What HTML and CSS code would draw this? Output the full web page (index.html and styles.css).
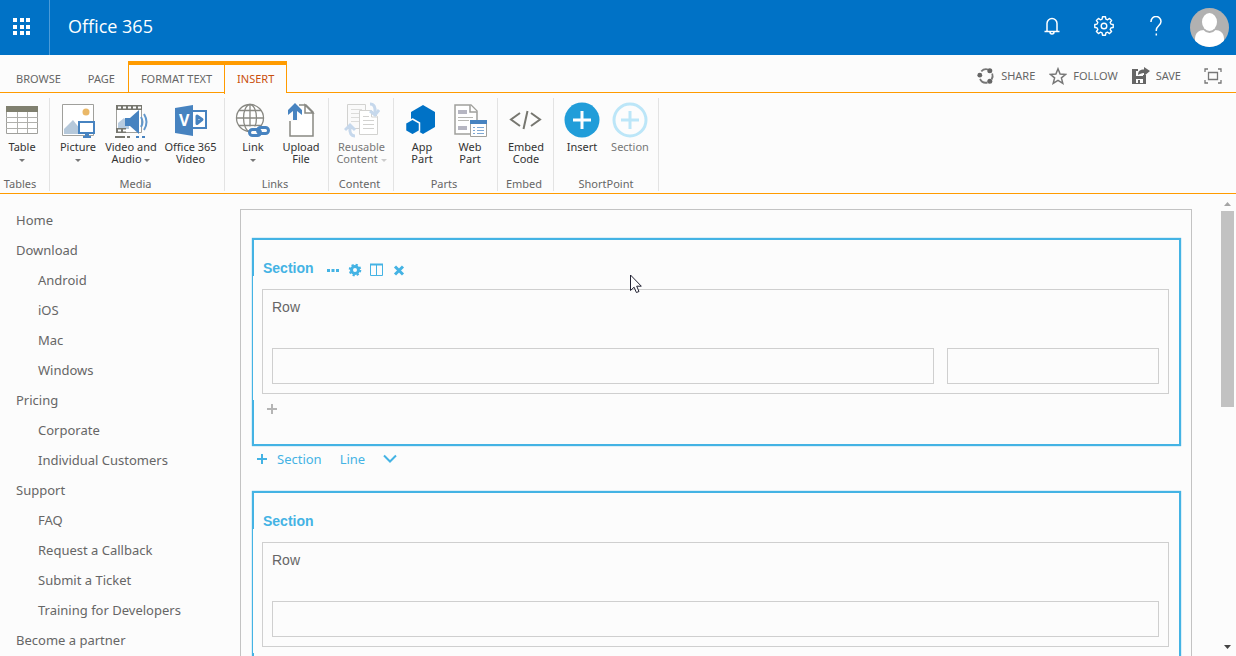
FILE: index.html
```html
<!DOCTYPE html>
<html lang="en">
<head>
	<meta charset="UTF-8">
	<meta name="viewport" content="width=device-width, initial-scale=1.0">
	<title>Office 365</title>
	<link rel="stylesheet" href="styles.css">
</head>

<body>
	<header class="suite-bar">
		<button class="waffle" aria-label="App launcher">
			<svg width="18" height="18" viewBox="0 0 18 18" fill="#fff"><path d="M0 0h4v4H0zM7 0h4v4H7zM13 0h4v4h-4zM0 7h4v4H0zM7 7h4v4H7zM13 7h4v4h-4zM0 13h4v4H0zM7 13h4v4H7zM13 13h4v4h-4z"/></svg>
		</button>
		<a class="brand" href="#">Office 365</a>
		<button class="suite-btn" aria-label="Notifications">
			<svg width="18" height="20" viewBox="0 0 18 20" fill="none" stroke="#fff" stroke-width="1.500"><path d="M4 15.500V7.500a5 5 0 0 1 10 0v8M1.500 15.500h15M7 16a2 2 0 0 0 4 0"/></svg>
		</button>
		<button class="suite-btn" aria-label="Settings">
			<svg width="20" height="20" viewBox="0 0 20 20" fill="none" stroke="#fff" stroke-width="1.400"><path stroke-linejoin="round" d="M8.500 .8h3l.4 2.300 1.700.7 1.900-1.400 2.100 2.100-1.400 1.900.7 1.700 2.300.4v3l-2.300.4-.7 1.700 1.400 1.900-2.100 2.100-1.900-1.400-1.700.7-.4 2.300h-3l-.4-2.300-1.700-.7-1.900 1.400-2.100-2.100 1.400-1.900-.7-1.700-2.300-.4v-3l2.300-.4.7-1.700-1.400-1.900 2.100-2.100 1.900 1.400 1.700-.7z"/><circle cx="10" cy="10" r="2.800"/></svg>
		</button>
		<button class="suite-btn" aria-label="Help">
			<svg width="14" height="20" viewBox="0 0 14 20" fill="none" stroke="#fff" stroke-width="1.500"><path d="M2 6V5.500a5 5 0 0 1 10 0c0 4-4.700 4.500-4.700 8.500v1M7.300 17.500v2"/></svg>
		</button>
		<button class="avatar" aria-label="Account">
			<svg width="39" height="39" viewBox="0 0 39 39"><defs><clipPath id="face"><circle cx="19.500" cy="19.500" r="19.500"/></clipPath></defs><g clip-path="url(#face)"><path fill="#b1b1b1" d="M0 0h39v39H0z"/><path fill="#fff" d="M5 39V31c0-6 4-9 9-9h11c5 0 9 3 9 9v8z"/><ellipse cx="19.500" cy="14.500" rx="8.500" ry="10.500" fill="#b1b1b1"/><ellipse cx="19.500" cy="14" rx="7.500" ry="9" fill="#fff"/></g></svg>
		</button>
	</header>

	<nav class="tabs">
		<a class="tab" href="#">BROWSE</a>
		<a class="tab" href="#">PAGE</a>
		<div class="context-tabs">
			<a class="tab" href="#">FORMAT TEXT</a>
			<a class="tab active" href="#">INSERT</a>
		</div>
		<div class="actions">
			<button class="action">
				<svg width="18" height="18" viewBox="0 0 18 18" fill="none" stroke="#777" stroke-width="1.800"><path d="M4.300 4.300a6.700 6.700 0 0 1 6.700-1.800M15.200 6.500a6.700 6.700 0 0 1-.6 6M10.500 15.500a6.700 6.700 0 0 1-7.500-3.500"/><g fill="#666" stroke="none"><circle cx="12.800" cy="3.800" r="2.500"/><circle cx="2.800" cy="8.200" r="2.400"/><circle cx="12.800" cy="14.200" r="2.500"/></g></svg>
				SHARE
			</button>
			<button class="action">
				<svg width="18" height="18" viewBox="0 0 18 18" fill="none" stroke="#777" stroke-width="1.500"><path d="M9 1.800l2.100 5.200 5.600.4-4.300 3.500 1.400 5.400L9 13.300l-4.800 3 1.400-5.400L1.300 7.400l5.600-.4z"/></svg>
				FOLLOW
			</button>
			<button class="action">
				<svg width="18" height="18" viewBox="0 0 18 18"><path fill="#666" d="M0 2h6v2H4v5h7V8h3v9H0zM4 12v4h2v-3h2v3h3v-4z"/><path fill="#666" d="M12 0l6 4-6 5V6C9 6 8 7 6 8c0-4 2-5.500 6-5.500z"/></svg>
				SAVE
			</button>
			<button class="action" aria-label="Focus on content">
				<svg width="18" height="16" viewBox="0 0 18 16" fill="none" stroke="#777" stroke-width="1.300"><path d="M1 4V1h3M14 1h3v3M17 12v3h-3M4 15H1v-3M4.500 4.500h9v7h-9z"/></svg>
			</button>
		</div>
	</nav>

	<div class="ribbon">
		<section class="group first">
			<div class="commands">
				<button class="cmd">
					<svg width="36" height="36" viewBox="0 0 36 36"><path fill="#fff" stroke="#a0a09c" d="M2.500 4.500h31v27h-31z"/><path fill="none" stroke="#b0b0ac" d="M2 15.500h32M2 20.500h32M2 26.500h32M13.500 9v22M23.500 9v22"/><path fill="#80806f" d="M2 4h32v6H2z"/></svg>
					<span>Table<br><i class="caret"></i></span>
				</button>
			</div>
			<h2>Tables</h2>
		</section>
		<section class="group">
			<div class="commands">
				<button class="cmd">
					<svg width="36" height="36" viewBox="0 0 36 36"><path fill="#fff" stroke="#a0a09c" d="M2.500 2.500h31v31h-31z"/><circle cx="26" cy="10" r="3.500" fill="#eab868"/><path fill="#b5c8da" d="M4 32V27l9-9 7 9v5z"/><path fill="#fff" stroke="#4783c0" stroke-width="2" d="M19 20h15v11H19z"/><path fill="#4783c0" d="M25 31h4v3h2v2h-8v-2h2z"/></svg>
					<span>Picture<br><i class="caret"></i></span>
				</button>
				<button class="cmd video">
					<svg width="36" height="36" viewBox="0 0 36 36"><path fill="#fff" stroke="#a0a09c" d="M3.500 3.500h25v27h-25z"/><path fill="#b8cce0" d="M5 27v-6l6-5 5 6v5z"/><path stroke="#77776f" stroke-width="5" d="M3 5.500h26M3 28.500h10"/><path stroke="#fff" stroke-width="2" stroke-dasharray="3 2" d="M5 5.500h23M5 28.500h8"/><path fill="#4783c0" d="M12 16h5l9-8v24l-9-8h-5z"/><path fill="none" stroke="#6298cc" stroke-width="2" d="M28 15q3 5 0 10M31 12q5 8 0 16"/><path stroke="#77776f" stroke-width="2" d="M2 35h10M14 35h3"/><path stroke="#4783c0" stroke-width="2" d="M23 35h3M29 35h3"/></svg>
					<span>Video and<br>Audio <i class="caret"></i></span>
				</button>
				<button class="cmd office">
					<svg width="36" height="36" viewBox="0 0 36 36"><path fill="#fff" stroke="#4783c0" stroke-width="2" d="M18 9h15v17H18z"/><path fill="#4783c0" d="M2 6l18-3v31L2 31z"/><text class="logo-letter" x="6" y="24">V</text><path fill="#fff" stroke="#4783c0" stroke-width="3" stroke-linejoin="round" d="M24 14l5 3.500-5 4z"/></svg>
					<span>Office 365<br>Video</span>
				</button>
			</div>
			<h2>Media</h2>
		</section>
		<section class="group">
			<div class="commands">
				<button class="cmd">
					<svg width="36" height="36" viewBox="0 0 36 36" fill="none"><g stroke="#898983" stroke-width="1.300"><circle cx="15" cy="16" r="13.500" fill="#fff"/><ellipse cx="15" cy="16" rx="6.500" ry="13.500"/><path d="M15 2.500v27M1.500 16h27M4 8.500h22M4 23.500h22"/></g><path stroke="#fcfcfc" stroke-width="9" d="M14 29h18"/><g stroke="#4783c0" stroke-width="3"><rect x="14.500" y="27.500" width="11" height="6" rx="3"/><rect x="22.500" y="25.500" width="11" height="6" rx="3"/></g></svg>
					<span>Link<br><i class="caret"></i></span>
				</button>
				<button class="cmd">
					<svg width="36" height="36" viewBox="0 0 36 36"><path fill="#fff" stroke="#898983" stroke-width="1.500" d="M6 3h17l7 7v24H7V15"/><path fill="#fff" stroke="#898983" stroke-width="1.500" d="M22 3v8h8z"/><path stroke="#fcfcfc" stroke-width="10" d="M11 0v19"/><path fill="#4783c0" d="M12 1l7 7v5l-5-4v9h-4V9l-5 4V8z"/></svg>
					<span>Upload<br>File</span>
				</button>
			</div>
			<h2>Links</h2>
		</section>
		<section class="group">
			<div class="commands">
				<button class="cmd reusable" disabled>
					<svg width="36" height="36" viewBox="0 0 36 36"><path fill="#fafafa" stroke="#d2d2d0" d="M3.500 2.500h18v24h-18z"/><path stroke="#dcdcda" d="M7 7.500h11M7 11.500h8M7 15.500h8M7 19.500h8"/><path fill="#fff" stroke="#d2d2d0" d="M15.500 8.500h12l6 6v18h-18z"/><path fill="none" stroke="#d2d2d0" d="M19 14.500h6M19 18.500h11M19 22.500h11M19 26.500h11M27.500 9v6h6"/><path fill="none" stroke="#c6d8ec" stroke-width="3" d="M26 2q6 0 5 9M11 34q-6 0-5-9"/><path fill="none" stroke="#c6d8ec" stroke-width="3" d="M26 9l5 4 4-5M1 28l5-5 5 5"/></svg>
					<span>Reusable<br>Content <i class="caret"></i></span>
				</button>
			</div>
			<h2>Content</h2>
		</section>
		<section class="group">
			<div class="commands">
				<button class="cmd">
					<svg width="36" height="36" viewBox="0 0 36 36"><path fill="#0072c6" d="M19 3l12 7v15l-12 7-12-7V10z"/><path fill="#0072c6" stroke="#fcfcfc" stroke-width="1.500" d="M8.500 17l7 4v8l-7 4-7-4v-8z"/></svg>
					<span>App<br>Part</span>
				</button>
				<button class="cmd">
					<svg width="36" height="36" viewBox="0 0 36 36"><path fill="#fff" stroke="#a0a09c" stroke-width="1.500" d="M3 3h16l6 6v23H3z"/><path fill="#fff" stroke="#a0a09c" stroke-width="1.500" d="M18 3v7h7"/><path fill="#b6b6c2" d="M6 8h9v4H6zM6 24h9v4H6z"/><path stroke="#b6b6b2" d="M6 15.500h15M6 18.500h11"/><path fill="#fff" stroke="#a0a09c" d="M18.500 18.500h16v16h-16z"/><path fill="#4783c0" d="M18 18h17v4H18z"/><path stroke="#7fa8d3" stroke-dasharray="2 2 8 9" d="M21 25.500h11M21 28.500h11M21 31.500h11"/></svg>
					<span>Web<br>Part</span>
				</button>
			</div>
			<h2>Parts</h2>
		</section>
		<section class="group">
			<div class="commands">
				<button class="cmd">
					<svg width="36" height="36" viewBox="0 0 36 36" fill="none" stroke="#777770" stroke-width="2"><path d="M12 11l-9 6.500 9 6.500M23 11l9 6.500-9 6.500M19.500 9l-4 18"/></svg>
					<span>Embed<br>Code</span>
				</button>
			</div>
			<h2>Embed</h2>
		</section>
		<section class="group last">
			<div class="commands">
				<button class="cmd">
					<svg width="36" height="36" viewBox="0 0 36 36"><circle cx="18" cy="18" r="17.500" fill="#219dd9"/><path stroke="#fff" stroke-width="3" d="M9 18h18M18 9v18"/></svg>
					<span>Insert</span>
				</button>
				<button class="cmd" disabled>
					<svg width="36" height="36" viewBox="0 0 36 36"><circle cx="18" cy="18" r="16" fill="none" stroke="#bce6f8" stroke-width="3"/><path stroke="#bce6f8" stroke-width="3" d="M9 18h18M18 9v18"/></svg>
					<span>Section</span>
				</button>
			</div>
			<h2>ShortPoint</h2>
		</section>
	</div>

	<main class="workspace">
		<nav class="side-nav">
			<ul>
				<li><a href="#">Home</a></li>
				<li><a href="#">Download</a>
					<ul>
						<li><a href="#">Android</a></li>
						<li><a href="#">iOS</a></li>
						<li><a href="#">Mac</a></li>
						<li><a href="#">Windows</a></li>
					</ul>
				</li>
				<li><a href="#">Pricing</a>
					<ul>
						<li><a href="#">Corporate</a></li>
						<li><a href="#">Individual Customers</a></li>
					</ul>
				</li>
				<li><a href="#">Support</a>
					<ul>
						<li><a href="#">FAQ</a></li>
						<li><a href="#">Request a Callback</a></li>
						<li><a href="#">Submit a Ticket</a></li>
						<li><a href="#">Training for Developers</a></li>
					</ul>
				</li>
				<li><a href="#">Become a partner</a></li>
			</ul>
		</nav>

		<div class="editor">
			<section class="block">
				<div class="block-head">
					<h3>Section</h3>
					<div class="block-tools">
						<button aria-label="More"><svg width="14" height="14" viewBox="0 0 14 14" fill="#44b3e4"><path d="M1 6h3v3H1zM5.500 6h3v3h-3zM10 6h3v3h-3z"/></svg></button>
						<button aria-label="Settings"><svg width="14" height="14" viewBox="0 0 14 14" fill="none" stroke="#44b3e4"><circle cx="7" cy="7" r="3.500" stroke-width="3"/><circle cx="7" cy="7" r="5.300" stroke-width="2" stroke-dasharray="2.200 1.960"/></svg></button>
						<button aria-label="Columns"><svg width="14" height="14" viewBox="0 0 14 14" fill="none" stroke="#44b3e4"><path d="M.5 1.500h12v11H.5zM6.500 2v10"/><path d="M0 1.500h13" stroke-width="2"/></svg></button>
						<button aria-label="Delete"><svg width="14" height="14" viewBox="0 0 14 14" fill="none" stroke="#44b3e4" stroke-width="3"><path d="M3 3.500l8 8M11 3.500l-8 8"/></svg></button>
					</div>
				</div>
				<div class="block-body">
					<div class="row">
						<h4>Row</h4>
						<div class="columns two">
							<div class="column"></div>
							<div class="column"></div>
						</div>
					</div>
				</div>
				<button class="add-row" aria-label="Add row">
					<svg width="12" height="12" viewBox="0 0 12 12" stroke="#b5b5b5" stroke-width="2"><path d="M1 6h10M6 1v10"/></svg>
				</button>
			</section>

			<div class="insert-bar">
				<button><svg width="12" height="12" viewBox="0 0 12 12" stroke="#44b3e4" stroke-width="2"><path d="M1 6h10M6 1v10"/></svg>Section</button>
				<button>Line</button>
				<button aria-label="More"><svg width="14" height="12" viewBox="0 0 14 12" fill="none" stroke="#44b3e4" stroke-width="2"><path d="M1 2.500l6 6 6-6"/></svg></button>
			</div>

			<section class="block">
				<div class="block-head">
					<h3>Section</h3>
				</div>
				<div class="block-body">
					<div class="row">
						<h4>Row</h4>
						<div class="columns">
							<div class="column"></div>
						</div>
					</div>
				</div>
				<button class="add-row" aria-label="Add row">
					<svg width="12" height="12" viewBox="0 0 12 12" stroke="#b5b5b5" stroke-width="2"><path d="M1 6h10M6 1v10"/></svg>
				</button>
			</section>
		</div>

		<div class="scrollbar">
			<svg width="13" height="16" viewBox="0 0 13 16" fill="#a5a5a5"><path d="M3 11l3.500-4 3.500 4z"/></svg>
			<div class="thumb"></div>
			<svg width="13" height="16" viewBox="0 0 13 16" fill="#444"><path d="M3 5h7L6.500 9z"/></svg>
		</div>
	</main>

	<svg class="pointer" width="12" height="20" viewBox="0 0 12 20"><path fill="#fff" stroke="#223" d="M.5 1v15.500l3.600-3.300 2.300 5.300 2.600-1-2.300-5.300h4.600z"/></svg>
</body>
</html>
```
FILE: styles.css
```css
* {
	box-sizing: border-box;
}

body, html {
	height: 100%;
}

body {
	display: flex;
	flex-direction: column;
	overflow: hidden;
	margin: 0;
	background: #fcfcfc;
	color: #666;
	font: 11px "Noto Sans", "Open Sans", sans-serif;
}

a {
	color: inherit;
	text-decoration: none;
}

button {
	padding: 0;
	border: 0;
	background: none;
	color: inherit;
	font: inherit;
}

svg {
	display: block;
	flex: none;
}

h2, h3, h4, ul {
	margin: 0;
	padding: 0;
	font-weight: normal;
	list-style: none;
}

/* top blue bar */
.suite-bar {
	display: flex;
	align-items: center;
	flex: none;
	height: 55px;
	padding-right: 7px;
	background: #0072c6;
	color: #fff;
}
.waffle {
	width: 50px;
	height: 100%;
	padding: 0 0 2px 13px;
	border-right: 1px solid #4a9bd8;
}
.brand {
	flex: 1;
	padding: 0 0 4px 18px;
	font: 18px "Open Sans", "Noto Sans", sans-serif;
}
.suite-btn {
	display: flex;
	justify-content: center;
	width: 52px;
	padding-bottom: 4px;
}
.avatar {
	margin-left: 8px;
}

/* ribbon tabs */
.tabs {
	display: flex;
	flex: none;
	align-items: flex-end;
	height: 38px;
	padding-left: 2px;
	border-bottom: 1px solid #ff9b00;
}
.tab {
	height: 27px;
	padding: 0 14px;
	line-height: 27px;
}
.tab + .tab {
	padding: 0 13px;
}
.context-tabs {
	display: flex;
	border: 1px solid #ff9b00;
	border-top-width: 4px;
	border-bottom: 0;
}
.context-tabs .tab {
	padding: 0 12px;
}
.context-tabs .active {
	height: 29px;
	margin-bottom: -2px;
	border-left: 1px solid #ff9b00;
	background: #fcfcfc;
	color: #c94f0c;
}
.actions {
	display: flex;
	align-items: center;
	align-self: stretch;
	gap: 14px;
	margin-left: auto;
	padding: 4px 14px 0 0;
}
.action {
	display: flex;
	align-items: center;
	gap: 6px;
}
.action:last-child {
	margin-left: 9px;
}

/* ribbon */
.ribbon {
	display: flex;
	flex: none;
	height: 101px;
	padding: 5px 0 2px;
	border-bottom: 1px solid #ff9b00;
}
.group {
	display: flex;
	flex-direction: column;
	justify-content: space-between;
	padding: 4px 3px 0 4px;
	border-right: 1px solid #e3e3e3;
}
.group.first {
	padding: 4px 5px 0 0;
}
.group.last {
	padding-right: 4px;
}
.group h2 {
	padding-right: 4px;
	font-size: 11px;
	line-height: 14px;
	text-align: center;
}
.group.last h2 {
	padding: 0;
}
.commands {
	display: flex;
}
.cmd {
	display: flex;
	flex-direction: column;
	align-items: center;
	gap: 3px;
	width: 48px;
	color: #333;
	line-height: 12px;
	white-space: nowrap;
}
.first .cmd {
	width: 44px;
}
.video {
	width: 58px;
}
.office {
	width: 61px;
}
.reusable {
	width: 57px;
}
.cmd:disabled {
	color: #777;
}
.logo-letter {
	fill: #fff;
	font: bold 16px "Open Sans", sans-serif;
}
.caret {
	display: inline-block;
	border: 3px solid transparent;
	border-top-color: #777;
	border-bottom: 0;
	vertical-align: middle;
}
.cmd:disabled .caret {
	border-top-color: #ccc;
}

/* page */
.workspace {
	display: flex;
	flex: 1;
	overflow: hidden;
	min-height: 0;
}
.side-nav {
	flex: none;
	width: 240px;
	padding: 11px 0 0 16px;
	font-size: 13px;
	line-height: 30px;
}
.side-nav ul ul {
	padding-left: 22px;
}
.editor {
	flex: 1;
	overflow: hidden;
	margin-top: 15px;
	padding: 28px 10px 0 11px;
	border: 1px solid #c3c3c3;
	border-bottom: 0;
}

.block {
	border: 2px solid #44b3e4;
	box-shadow: 0 0 1px #44b3e4;
}
.block-head {
	display: flex;
	gap: 12px;
	height: 36px;
	padding: 20px 0 0 9px;
	color: #44b3e4;
}
.block-head h3 {
	font: bold 14px/16px "Liberation Sans", Arial, sans-serif;
}
.block-tools {
	display: flex;
	gap: 8px;
	padding-top: 3px;
}
.block-body {
	margin-left: -1px;
	padding: 13px 10px 6px 9px;
	background: #fcfcfc;
}
.row {
	padding: 9px;
	border: 1px solid #cfcfcf;
}
.row h4 {
	margin-bottom: 33px;
	font: 14px/16px "Liberation Sans", Arial, sans-serif;
}
.columns {
	display: grid;
	gap: 13px;
}
.columns.two {
	grid-template-columns: 25fr 8fr;
}
.column {
	height: 36px;
	border: 1px solid #cfcfcf;
}
.add-row {
	display: block;
	height: 44px;
	padding: 3px 12px 29px;
}

.insert-bar {
	display: flex;
	align-items: flex-start;
	gap: 18px;
	height: 45px;
	padding: 4px 0 0 4px;
	color: #44b3e4;
	font-size: 13px;
	line-height: 18px;
}
.insert-bar button {
	display: flex;
	align-items: center;
	gap: 9px;
	min-height: 18px;
}

.scrollbar {
	display: flex;
	flex-direction: column;
	width: 13px;
	margin: 1px 2px 0 29px;
}
.thumb {
	height: 196px;
	margin-bottom: auto;
	background: #c2c2c2;
}

.pointer {
	position: absolute;
	top: 274px;
	left: 630px;
}
```
